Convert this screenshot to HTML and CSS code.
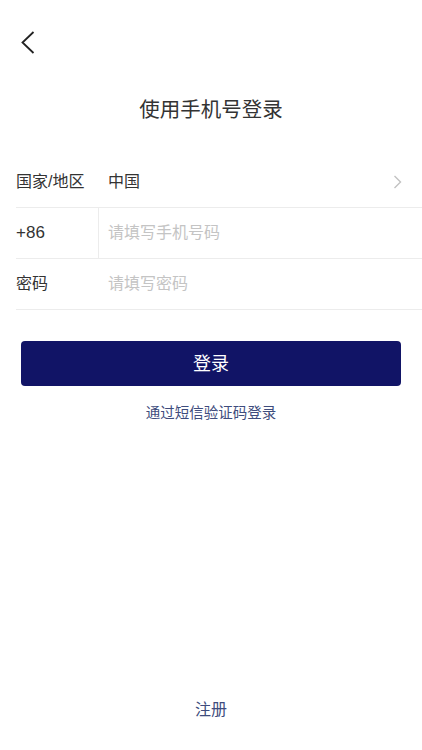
FILE: index.html
```html
<!DOCTYPE html>
<html lang="zh-CN">
<head>
    <meta charset="UTF-8">
    <meta name="viewport" content="width=device-width, initial-scale=1.0">
    <title>使用手机号登录</title>
    <link rel="stylesheet" href="styles.css">
</head>
<body>
    <div class="page">
        <header class="nav-bar">
            <a class="back-btn" href="#">
                <svg width="14" height="23" viewBox="0 0 14 23">
                    <polyline points="12.5,1 1.5,11.5 12.5,22" fill="none" stroke="#222" stroke-width="1.8" stroke-linejoin="miter"/>
                </svg>
            </a>
        </header>

        <h1 class="title">使用手机号登录</h1>

        <section class="form">
            <div class="form-row">
                <span class="row-label">国家/地区</span>
                <span class="row-value">中国</span>
                <svg class="row-arrow" width="9" height="14" viewBox="0 0 9 14">
                    <polyline points="1.5,1 7.5,7 1.5,13" fill="none" stroke="#c2c2c2" stroke-width="1.4"/>
                </svg>
            </div>
            <div class="form-row">
                <span class="row-label short">+86</span>
                <span class="row-value split placeholder">请填写手机号码</span>
            </div>
            <div class="form-row">
                <span class="row-label">密码</span>
                <span class="row-value placeholder">请填写密码</span>
            </div>
        </section>

        <button class="login-btn">登录</button>
        <a class="link sms-link" href="#">通过短信验证码登录</a>

        <div class="spacer"></div>

        <a class="link register-link" href="#">注册</a>
    </div>
</body>
</html>
```

FILE: styles.css
```css
body {
    margin: 0;
    padding: 0;
    background-color: #fff;
    font-family: "Liberation Sans", "Noto Sans CJK SC", sans-serif;
    color: #333;
}

.page {
    display: flex;
    flex-direction: column;
    min-height: 750px;
}

.nav-bar {
    height: 84px;
    padding-left: 21px;
    padding-top: 31px;
    box-sizing: border-box;
}

.back-btn {
    display: block;
    width: 14px;
    height: 23px;
}

.back-btn svg {
    display: block;
}

.title {
    margin: 12px 0 0;
    text-align: center;
    font-size: 20.5px;
    line-height: 28px;
    font-weight: normal;
    color: #333;
}

.form {
    margin-top: 33px;
    margin-left: 16px;
}

.form-row {
    display: flex;
    align-items: center;
    height: 50px;
    border-bottom: 1px solid #ececec;
    font-size: 16px;
    line-height: 22px;
}

.row-label {
    width: 92px;
    flex-shrink: 0;
    color: #333;
    padding-bottom: 1px;
}

.row-label.short {
    width: 82px;
    font-size: 17px;
}

.row-value {
    flex: 1;
    color: #333;
    padding-bottom: 1px;
}

.row-value.split {
    align-self: stretch;
    display: flex;
    align-items: center;
    border-left: 1px solid #ececec;
    padding-left: 9px;
}

.placeholder {
    color: #c4c4c4;
}

.row-arrow {
    margin-right: 20px;
}

.login-btn {
    display: block;
    margin: 31px 21px 0;
    height: 45px;
    padding: 0 0 3px;
    border: none;
    border-radius: 4px;
    background-color: #111466;
    color: #fff;
    font-family: inherit;
    font-size: 18px;
}

.link {
    display: block;
    text-align: center;
    text-decoration: none;
    color: #3e4c7d;
}

.sms-link {
    margin-top: 17px;
    font-size: 14.5px;
    line-height: 20px;
}

.spacer {
    flex: 1;
}

.register-link {
    font-size: 16px;
    line-height: 22px;
    margin-bottom: 29px;
}
```
